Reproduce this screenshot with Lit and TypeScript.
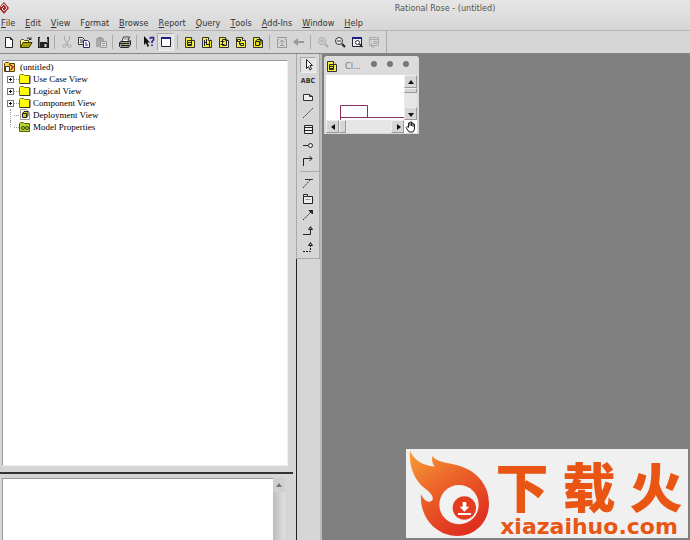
import { LitElement, html, css, svg } from "lit";
import { customElement } from "lit/decorators.js";

type Shape = ReturnType<typeof svg>;

const outlined = svg`<path d="M1.500 1.500h6l3 3v7h-9z" fill="#f4f03c" stroke="#333"/><path d="M7.500 1.500v3h3" fill="#fff" stroke="#333"/>`;

const icons: Record<string, Shape> = {
  newdoc: svg`<path d="M2.500 1.500h5l2 2v8h-7z" fill="#fff" stroke="#222"/><path d="M7.500 1.500v2h2" fill="none" stroke="#222"/>`,
  open: svg`<path d="M.5 11V4.500l1-1h2l1 1h4v2" fill="#ffffa0" stroke="#554f00"/><path d="M.5 11.500L3 6.500h9l-3 5z" fill="#a8a000" stroke="#333000"/><path d="M7 2.500q2-2 4 1m0-2v2H9" fill="none" stroke="#222"/>`,
  save: svg`<path d="M1 1h11v11H1z" fill="#222"/><path d="M3 1h7v5H3z" fill="#d6d6d6"/><path d="M2.500 2v9M10.500 3v4" stroke="#808000"/><path d="M8.500 8v3" stroke="#ddd" stroke-width="2"/>`,
  cut: svg`<path d="M3.500 0v3l3.500 6M8.500 0v3L5 9" fill="none" stroke="#aaa"/><circle cx="3.500" cy="10" r="1.500" fill="none" stroke="#aaa"/><circle cx="8.500" cy="10" r="1.500" fill="none" stroke="#aaa"/>`,
  copy: svg`<path d="M.5 1.500h4l2 2v5h-6z" fill="#eee" stroke="#333"/><path d="M2 4h3M2 6h3" stroke="#333"/><path d="M5.500 4.500h4l2 2v5h-6z" fill="#fff" stroke="#282878"/><path d="M7 7h2M7 9h3" stroke="#282878"/>`,
  paste: svg`<path d="M1 2h8v9H1z" fill="#aaa"/><path d="M3 1h4v2H3z" fill="#999"/><path d="M5.500 5.500h6v6h-6z" fill="#ddd" stroke="#999"/><path d="M7 7.500h3M7 9.500h3" stroke="#999"/>`,
  print: svg`<path d="M3 5l1.500-4h6L9 5" fill="#fff" stroke="#333"/><path d="M5 3h4" stroke="#777"/><path d="M.5 6.500l1.500-1h8l1.500-1v4L9.500 11.500h-8l-1-1z" fill="#999" stroke="#222"/><path d="M1 7.500h9M2 9.500h8" stroke="#222"/><path d="M6 8.500h2" stroke="#d8d000"/>`,
  help: svg`<path d="M1 0v9l2-2 1.500 4 1.500-1-1.500-3.500H7z" fill="#111"/><path d="M7.500 3V1.500h3V4L9 5.500V7M9 8.500V10" fill="none" stroke="#202090" stroke-width="1.600"/>`,
  win: svg`<path d="M1.500 1.500h9v9h-9z" fill="#fff" stroke="#223"/><path d="M1 1h10v2H1z" fill="#202080"/>`,
  classd: svg`${outlined}<path d="M3.500 4.500h4v5h-4zM3.500 6.500h4M3.500 8.500h4" fill="none" stroke="#222"/>`,
  inter: svg`${outlined}<path d="M3.500 4v6M5.500 3v6M8.500 5v6M3 6.500h3M5 8.500h4" stroke="#222" fill="none"/>`,
  comp: svg`${outlined}<path d="M4.500 3.500h4v6h-4zM2.500 5.500h4M2.500 8.500h4" fill="none" stroke="#222"/>`,
  state: svg`${outlined}<path d="M2.500 3.500h3v2h-3zM5.500 7.500h3v2h-3zM4.500 6v2.500h1" fill="none" stroke="#222"/>`,
  deploy: svg`${outlined}<path d="M3.500 5.500l1.500-2h4v4L7.500 9.500h-4z" fill="#e5dd00" stroke="#222"/><path d="M3.500 5.500h4v4M7.500 5.500L9 3.500" fill="none" stroke="#222"/>`,
  parent: svg`<path d="M1 1.500h10M3 3.500H1.500v8h9v-8H9M6 10V4M3.500 6.500L6 4l2.500 2.500M4 9.500h4" fill="none" stroke="#999"/>`,
  back: svg`<path d="M0 6l5-4v3h6v2H5v3z" fill="#999"/>`,
  zin: svg`<circle cx="5" cy="5" r="3.500" fill="none" stroke="#aaa"/><path d="M3 5h4M5 3v4" stroke="#aaa"/><path d="M8 8l3 3" stroke="#aaa" stroke-width="2"/>`,
  zout: svg`<circle cx="5" cy="5" r="3.500" fill="#eee" stroke="#333"/><path d="M3 5h4" stroke="#333"/><path d="M8 8l3 3" stroke="#222" stroke-width="2"/>`,
  fit: svg`<path d="M1.500 1.500h9v9h-9z" fill="#eee" stroke="#223"/><path d="M1 1h10v2H1z" fill="#202080"/><circle cx="6.500" cy="6.500" r="2" fill="#fff" stroke="#333"/><path d="M8.500 8l3 3" stroke="#222" stroke-width="1.500"/>`,
  undo: svg`<path d="M1.500 1.500h9v8h-9zM1 3.500h10M6 5.500h3v2H6zM3.500 7v4h3" fill="none" stroke="#aaa"/>`,
  select: svg`<path d="M4.500.5v9l2-2 1.500 3.500 1.500-1L8 6.500h2.500z" fill="#fff" stroke="#222"/>`,
  note: svg`<path d="M1.500 3.500h6l3 2v4h-9zM7.500 3.500v2h3" fill="#eee" stroke="#333"/>`,
  dash: svg`<path d="M1 11L11 1" stroke="#333" stroke-dasharray="2 1"/>`,
  cls: svg`<path d="M2.500 2.500h8v8h-8zM2.500 4.500h8M2.500 7.500h8" fill="#eee" stroke="#222"/>`,
  iface: svg`<path d="M1 6.500h5" stroke="#222"/><circle cx="8.500" cy="6.500" r="2" fill="#eee" stroke="#222"/>`,
  assoc: svg`<path d="M1.500 11V3.500H10M7.500 1l2.500 2.500L7.500 6" fill="none" stroke="#222"/>`,
  ac: svg`<path d="M1 11l7-8" stroke="#333" stroke-dasharray="2 1"/><path d="M3 2.500h8" stroke="#333"/>`,
  pack: svg`<path d="M1.500 3.500v-2h4v2h5v7h-9zM1.500 3.500h4" fill="#eee" stroke="#222"/><path d="M3.500 6.500h5" stroke="#999"/>`,
  dep: svg`<path d="M1 11l9-9" stroke="#222" stroke-dasharray="2 1"/><path d="M7 1.500h3.500V5z" fill="#222" stroke="#222"/>`,
  gen: svg`<path d="M1 9.500h7.500V4" fill="none" stroke="#222"/><path d="M6.500 4.500l2-3 2 3z" fill="#999" stroke="#222"/>`,
  real: svg`<path d="M1 10.500h7.500V4" fill="none" stroke="#222" stroke-dasharray="2 1"/><path d="M6.500 4.500l2-3 2 3z" fill="#999" stroke="#222"/>`,
  folder: svg`<path d="M.5 10.500v-8l1-1h3l1 1h5v8z" fill="#ffff00" stroke="#807800"/><path d="M1 10.500h10V3" fill="none" stroke="#333"/>`,
  props: svg`<path d="M.5 10.500v-8l1-1h3l1 1h5v8z" fill="#b6d430" stroke="#606000"/><circle cx="4" cy="7" r="1.500" fill="#dd0" stroke="#242"/><circle cx="8" cy="7" r="1.500" fill="#dd0" stroke="#242"/>`,
  cube: svg`<path d="M1.500.5h6l3 3v7h-9z" fill="#fff" stroke="#999"/><path d="M3.500 4.500l1.500-2h4v4L7.500 8.500h-4z" fill="#d8d000" stroke="#222"/><path d="M3.500 4.500h4v4" fill="none" stroke="#222"/>`,
  root: svg`<path d="M.5 10.500v-8l1-1h3l1 1h5v8z" fill="#f4d840" stroke="#604000"/><path d="M1.500 5.500h4v5h-4z" fill="#fff" stroke="#333"/><path d="M5 3l4 3-2 3" fill="none" stroke="#a23020" stroke-width="1.500"/>`,
  rose: svg`<path d="M4 0l5 6-5 6-5-6z" fill="#a82828"/><path d="M1 5l3-3 3 4-3 3-2-2 2-2" fill="none" stroke="#f5dada"/>`,
  up: svg`<path d="M3 8l3-4 3 4z" fill="#111"/>`,
  softup: svg`<path d="M3 8l3-4 3 4z" fill="#777"/>`,
  down: svg`<path d="M3 5l3 4 3-4z" fill="#111"/>`,
  left: svg`<path d="M8 3L4 6l4 3z" fill="#111"/>`,
  right: svg`<path d="M5 3l4 3-4 3z" fill="#111"/>`,
  hand: svg`<path d="M4 11L1 6.500l1-1 1.500 1V2H5V1h1.500v1H8v1h1.500v5L8 11z" fill="#fff" stroke="#222"/><path d="M5 2v3M6.500 2v3M8 3v3" stroke="#222"/>`,
};

const icon = (name: string) =>
  html`<svg class="icon" width="12" height="12" viewBox="0 0 12 12" aria-hidden="true">${icons[name]}</svg>`;

// Each entry is the text before, at and after the access key.
const menus = [
  ["", "F", "ile"], ["", "E", "dit"], ["", "V", "iew"], ["F", "o", "rmat"], ["", "B", "rowse"], ["", "R", "eport"],
  ["", "Q", "uery"], ["", "T", "ools"], ["", "A", "dd-Ins"], ["", "W", "indow"], ["", "H", "elp"],
];

const tools = [
  "newdoc", "open", "save", "|", "cut", "copy", "paste", "|", "print", "|", "help", "win", "|",
  "classd", "inter", "comp", "state", "deploy", "|", "parent", "back", "|", "zin", "zout", "fit", "undo",
];

const palette = ["select", "ABC", "note", "dash", "cls", "iface", "assoc", "|", "ac", "pack", "dep", "gen", "real"];

const nodes = [
  { name: "Use Case View", icon: "folder", open: true },
  { name: "Logical View", icon: "folder", open: true },
  { name: "Component View", icon: "folder", open: true },
  { name: "Deployment View", icon: "cube", open: false },
  { name: "Model Properties", icon: "props", open: false },
];

@customElement("app-root")
export class AppRoot extends LitElement {
  static styles = css`
    :host {
      display: flex;
      flex-direction: column;
      position: relative;
      min-height: 100vh;
      background: #d6d6d6;
      color: #333;
      font: 9px/12px "DejaVu Sans Condensed", "DejaVu Sans", sans-serif;
    }
    :host, * { box-sizing: border-box; }
    button {
      display: flex;
      align-items: center;
      justify-content: center;
      margin: 0;
      padding: 0;
      border: 0;
      background: none;
      color: inherit;
      font: inherit;
    }
    .icon { display: block; flex: none; overflow: visible; }
    .title { display: flex; align-items: center; height: 15px; background: linear-gradient(#e6e6e6, #dedede); }
    .title h1 { flex: 1; margin: 0; padding-left: 188px; text-align: center; font: inherit; color: #555; }
    .menu {
      display: flex;
      gap: 10px;
      height: 16px;
      padding: 2px 1px;
      background: linear-gradient(#dedede, #d6d6d6);
      border-bottom: 1px solid #b4b4b4;
    }
    .tools { display: flex; align-items: center; align-self: flex-start; height: 22px; padding-right: 4px; border-right: 1px solid #aaa; }
    .tools button { width: 17px; height: 18px; }
    .tools .on { border: 1px solid #aaa; border-right-color: #eee; border-bottom-color: #eee; background: #e2e2e2; }
    .sep { width: 1px; height: 14px; margin: 0 3px; background: #aaa; }
    .body { flex: 1; display: grid; grid-template-columns: 296px 26px minmax(0, 1fr); border-top: 1px solid #888; }
    .side { display: flex; flex-direction: column; padding-right: 3px; }
    .tree {
      flex: 1;
      margin: 6px 5px 6px 2px;
      padding: 0 0 0 1px;
      background: #fff;
      border: 1px solid #999;
      border-right-color: #eee;
      border-bottom-color: #eee;
      font: 9px/12px "Liberation Serif", serif;
      color: #000;
    }
    ul { list-style: none; margin: 0; padding: 0; }
    .node { display: flex; align-items: center; height: 12px; }
    .node .icon + span { margin-left: 4px; }
    .kids .node { padding-left: 3px; }
    .kids .icon + span { margin-left: 2px; }
    .exp {
      width: 7px;
      height: 7px;
      border: 1px solid #777;
      background: linear-gradient(#111, #111) center / 3px 1px no-repeat, linear-gradient(#111, #111) center / 1px 3px no-repeat, #fff;
    }
    .stub { width: 4px; height: 12px; margin-left: 3px; border-left: 1px dotted #999; }
    .kids .node:last-child .stub { height: 6px; align-self: flex-start; }
    .dots { width: 5px; height: 1px; border-top: 1px dotted #999; }
    .docs { display: flex; height: 68px; padding: 4px 8px 0 2px; border-top: 2px solid #333; }
    .docs textarea {
      flex: 1;
      min-width: 0;
      resize: none;
      border: 1px solid #999;
      border-width: 1px 0 0 1px;
      border-radius: 0;
      background: #fff;
      outline: 0;
    }
    .docs .bar { width: 12px; height: 100%; background: linear-gradient(90deg, #bcbcbc, #e0e0e0); }
    .docs .bar button { width: 12px; height: 14px; background: #cfcfcf; }
    .rail { display: flex; flex-direction: column; border-right: 2px solid #bbb; }
    .palette { display: flex; flex-direction: column; padding: 3px 0 3px 3px; border: 1px solid #aaa; border-width: 0 1px 1px; }
    .palette button { width: 16px; height: 16px; font-size: 7px; font-weight: bold; color: #333; }
    .palette .on { border: 1px solid #aaa; border-right-color: #eee; border-bottom-color: #eee; background: #e4e4e4; }
    .rule { height: 1px; margin: 2px 0 3px; background: #aaa; }
    .edge { flex: 1; border-left: 1px solid #222; }
    .desk { background: #808080; padding: 2px; }
    .child { width: 95px; padding: 0 2px 1px; background: #d9d9d9; border-radius: 3px 3px 0 0; }
    .child header { display: flex; align-items: center; height: 19px; background: #dcdcdc; }
    .child h2 { flex: 1; margin: 0 0 0 7px; font: inherit; color: #777; }
    .lights { display: flex; gap: 10px; padding-right: 8px; margin-bottom: 4px; }
    .lights button { width: 6px; height: 6px; border-radius: 50%; background: #777; }
    .view { display: grid; grid-template-columns: minmax(0, 1fr) 13px; grid-template-rows: 45px 13px; background: #fff; }
    .canvas { width: 100%; height: 45px; }
    .vbar, .hbar { display: flex; background: #e6e6e6; }
    .vbar { flex-direction: column; }
    .view button { width: 13px; height: 13px; background: #d6d6d6; border: 1px solid #999; border-left-color: #eee; border-top-color: #eee; }
    .view .vthumb { height: 5px; }
    .view .hthumb { width: 7px; }
    .view .push { margin-left: auto; }
    .view .low { margin-top: auto; }
    .view .pan { border: 0; background: none; }
    .brand { position: absolute; right: 2px; bottom: 2px; display: flex; width: 282px; height: 89px; background: #f0f0f0; color: #e95513; }
    .brand .words { flex: 1; display: flex; flex-direction: column; align-items: center; }
    .brand .name { display: flex; gap: 14px; margin-top: 10px; height: 58px; font: 900 53px/52px "Noto Sans CJK SC", sans-serif; }
    .brand .site { font: bold 22px/20px "DejaVu Sans", sans-serif; color: #e95513; text-decoration: none; }
  `;

  render() {
    return html`
      <header class="title">${icon("rose")}<h1>Rational Rose - (untitled)</h1></header>
      <nav class="menu">
        ${menus.map(([a, k, b]) => html`<button>${a}<u>${k}</u>${b}</button>`)}
      </nav>
      <div class="tools" role="toolbar">
        ${tools.map((t) => t === "|"
          ? html`<span class="sep"></span>`
          : html`<button class=${t === "win" ? "on" : ""} aria-label=${t}>${icon(t)}</button>`)}
      </div>
      <main class="body">
        <section class="side">
          <div class="tree">
            <ul>
              <li>
                <div class="node">${icon("root")}<span>(untitled)</span></div>
                <ul class="kids">
                  ${nodes.map((n) => html`<li class="node">
                    ${n.open ? html`<button class="exp" aria-label="Expand"></button>` : html`<i class="stub"></i>`}
                    <i class="dots"></i>${icon(n.icon)}<span>${n.name}</span>
                  </li>`)}
                </ul>
              </li>
            </ul>
          </div>
          <div class="docs">
            <textarea aria-label="Documentation"></textarea>
            <div class="bar"><button aria-label="Scroll up">${icon("softup")}</button></div>
          </div>
        </section>
        <aside class="rail">
          <div class="palette" role="toolbar">
            ${palette.map((t) => t === "|"
              ? html`<span class="rule"></span>`
              : html`<button class=${t === "select" ? "on" : ""} aria-label=${t}>${t === "ABC" ? t : icon(t)}</button>`)}
          </div>
          <div class="edge"></div>
        </aside>
        <section class="desk">
          <article class="child">
            <header>
              ${icon("classd")}
              <h2>Cl...</h2>
              <div class="lights">
                <button aria-label="Minimize"></button><button aria-label="Maximize"></button><button aria-label="Close"></button>
              </div>
            </header>
            <div class="view">
              <svg class="canvas" viewBox="0 0 78 45" preserveAspectRatio="xMinYMin slice" aria-hidden="true">
                <path d="M14.500 45V30.500h27v12M14 42.500h64" fill="none" stroke="#8c3060"/>
              </svg>
              <div class="vbar">
                <button aria-label="Scroll up">${icon("up")}</button>
                <button class="vthumb" aria-label="Vertical position"></button>
                <button class="low" aria-label="Scroll down">${icon("down")}</button>
              </div>
              <div class="hbar">
                <button aria-label="Scroll left">${icon("left")}</button>
                <button class="hthumb" aria-label="Horizontal position"></button>
                <button class="push" aria-label="Scroll right">${icon("right")}</button>
              </div>
              <button class="pan" aria-label="Pan">${icon("hand")}</button>
            </div>
          </article>
        </section>
      </main>
      <aside class="brand">
        <svg width="84" height="89" viewBox="18 27 252 267" aria-hidden="true">
          <defs>
            <linearGradient id="fire" x1="0" y1="0" x2=".6" y2="1">
              <stop offset="0" stop-color="#f6a038"/><stop offset=".45" stop-color="#ec6528"/><stop offset="1" stop-color="#e03020"/>
            </linearGradient>
          </defs>
          <path fill="url(#fire)" d="M30 32C42 62 70 76 104 80C97 70 95 60 97 48C108 64 130 66 156 72C224 84 267 130 267 190C267 246 226 288 172 288C112 288 58 236 63 162C70 180 82 188 93 184C105 176 96 160 76 146C46 124 26 84 30 32Z"/>
          <circle cx="177" cy="194" r="59" fill="#f2f2f2"/>
          <circle cx="193" cy="204" r="35" fill="#e43c20"/>
          <path fill="#fff" d="M188 186h11v14h9l-15 15-14-15h9zM174 219h39v6h-39z"/>
        </svg>
        <div class="words">
          <div class="name"><span>下</span><span>载</span><span>火</span></div>
          <a class="site" href="#">xiazaihuo.com</a>
        </div>
      </aside>
    `;
  }
}
